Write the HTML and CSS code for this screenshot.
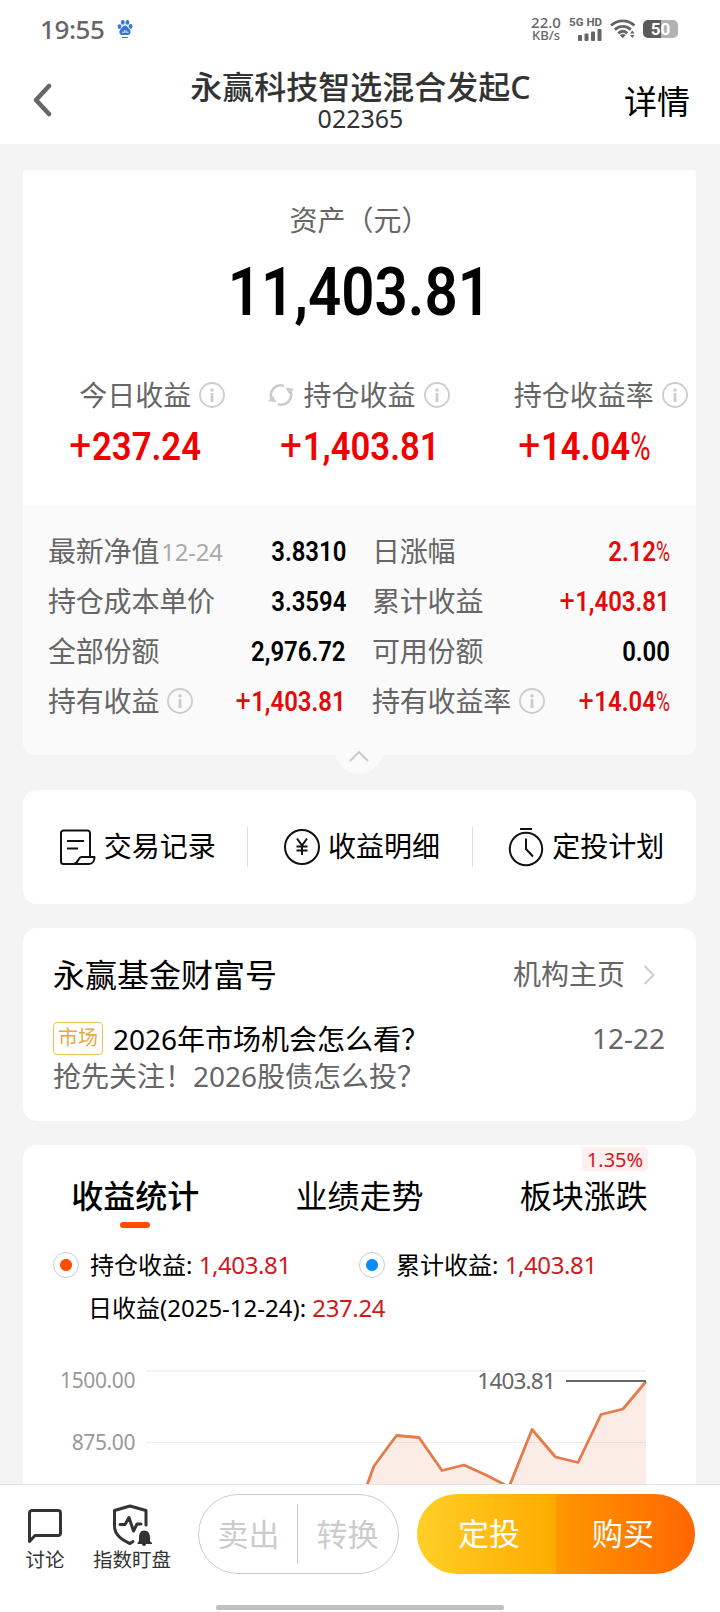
FILE: index.html
```html
<!DOCTYPE html>
<html lang="zh-CN">
<head>
    <meta charset="UTF-8">
    <title>永赢科技智选混合发起C</title>
    <link rel="stylesheet" href="styles.css">
</head>
<body>
<svg width="0" height="0" class="defs">
    <symbol id="info" viewBox="0 0 26 26">
        <circle cx="13" cy="13" r="12" fill="none" stroke="#ccc" stroke-width="1.8"/>
        <circle cx="13" cy="8" r="1.7" fill="#ccc"/>
        <path d="M13 11v9" stroke="#ccc" stroke-width="2.8"/>
    </symbol>
</svg>

<div class="status">
    <span class="clock">19:55</span>
    <svg class="paw" width="16" height="20" viewBox="0 0 16 20">
        <g fill="#3478d4">
            <ellipse cx="2.5" cy="7.6" rx="1.9" ry="2.3"/>
            <ellipse cx="5.8" cy="3.4" rx="1.9" ry="2.4"/>
            <ellipse cx="10.4" cy="3.4" rx="1.9" ry="2.4"/>
            <ellipse cx="13.6" cy="7.4" rx="1.9" ry="2.3"/>
            <path d="M8 6.5c2 0 2.8 2 4.200 3.500 2.200 1.800 1.800 6-1.200 6H5c-3 0-3.400-4.200-1.200-6C5.400 8.500 6 6.500 8 6.500z"/>
        </g>
        <path d="M5 13.200h2.500v-2M9 11.200v2h2.500" fill="none" stroke="#dcd9ff" stroke-width="1.100"/>
        <path d="M5 18.500h6" stroke="#c8405a" stroke-width="1"/>
    </svg>
    <div class="speed"><b>22.0</b><span>KB/s</span></div>
    <div class="signal">
        <b>5G HD</b>
        <svg width="24" height="12" viewBox="0 0 24 12" fill="#666">
            <rect x="0" y="6" width="4" height="6" rx="1"/>
            <rect x="6.500" y="4.500" width="4" height="7.500" rx="1"/>
            <rect x="13" y="2.500" width="4" height="9.500" rx="1"/>
            <rect x="19.500" y="0" width="4" height="12" rx="1"/>
        </svg>
    </div>
    <svg class="wifi" width="26" height="20" viewBox="0 0 26 20">
        <g fill="none" stroke="#666" stroke-width="2.800">
            <path d="M1 6.500C8 .2 17.500.2 24.500 6.500"/>
            <path d="M4.800 10.600c4.800-4.200 11.200-4.200 16 0"/>
            <path d="M8.300 14.200c2.800-2.400 6.200-2.400 9 0"/>
        </g>
        <path d="M9.800 16c2-1.500 4-1.500 6 0l-3 3.200z" fill="#666"/>
        <path d="M20 14.500l2.300-3 2.300 3zM20 16l2.300 3 2.300-3z" fill="#666"/>
    </svg>
    <div class="battery">50</div>
</div>

<header class="header">
    <svg class="back" width="20" height="34" viewBox="0 0 20 34">
        <path d="M16 3L3 17l13 14" fill="none" stroke="#666" stroke-width="4.500" stroke-linecap="round" stroke-linejoin="round"/>
    </svg>
    <div class="title">
        <h1>永赢科技智选混合发起C</h1>
        <p>022365</p>
    </div>
    <a class="more">详情</a>
</header>

<main class="main">
    <section class="asset">
        <div class="asset-label">资产（元）</div>
        <div class="asset-num"><span class="din">11,403.81</span></div>
        <div class="stats">
            <div class="stat">
                <div class="stat-label"><i></i><span>今日收益</span><svg width="26" height="26"><use href="#info"/></svg></div>
                <div class="stat-num"><span class="din"><span class="plus">+</span>237.24</span></div>
            </div>
            <div class="stat">
                <div class="stat-label">
                    <svg class="refresh" width="28" height="24" viewBox="0 0 28 24">
                        <g fill="none" stroke="#ccc" stroke-width="2.600">
                            <path d="M4.500 15.500A9.700 9.700 0 0 1 17 3"/>
                            <path d="M23.500 8.500A9.700 9.700 0 0 1 11 21"/>
                        </g>
                        <path d="M18.500 4.500l8.500 1.500-5 5zM9.500 19.500L1 18l5-5z" fill="#ccc"/>
                    </svg>
                    <span>持仓收益</span><svg width="26" height="26"><use href="#info"/></svg>
                </div>
                <div class="stat-num"><span class="din"><span class="plus">+</span>1,403.81</span></div>
            </div>
            <div class="stat">
                <div class="stat-label"><i></i><span>持仓收益率</span><svg width="26" height="26"><use href="#info"/></svg></div>
                <div class="stat-num"><span class="din"><span class="plus">+</span>14.04<span class="pct">%</span></span></div>
            </div>
        </div>
        <div class="detail">
            <div class="row"><label>最新净值<small>12-24</small></label><span class="din">3.8310</span></div>
            <div class="row"><label>日涨幅</label><span class="din red">2.12<span class="pct">%</span></span></div>
            <div class="row"><label>持仓成本单价</label><span class="din">3.3594</span></div>
            <div class="row"><label>累计收益</label><span class="din red"><span class="plus">+</span>1,403.81</span></div>
            <div class="row"><label>全部份额</label><span class="din">2,976.72</span></div>
            <div class="row"><label>可用份额</label><span class="din">0.00</span></div>
            <div class="row"><label>持有收益<svg width="26" height="26"><use href="#info"/></svg></label><span class="din red"><span class="plus">+</span>1,403.81</span></div>
            <div class="row"><label>持有收益率<svg width="26" height="26"><use href="#info"/></svg></label><span class="din red"><span class="plus">+</span>14.04<span class="pct">%</span></span></div>
        </div>
        <div class="fold">
            <svg width="20" height="12" viewBox="0 0 20 12"><path d="M1 11l9-9 9 9" fill="none" stroke="#ccc" stroke-width="2"/></svg>
        </div>
    </section>

    <section class="links">
        <a>
            <svg width="38" height="38" viewBox="0 0 38 38" fill="none" stroke="#111" stroke-width="2" stroke-linejoin="round">
                <path d="M31 28V5a2.500 2.500 0 0 0-2.500-2.500h-24A2.500 2.500 0 0 0 2 5v28.500A2.500 2.500 0 0 0 4.500 36H30c3.500 0 5.500-3 5.500-7H22.500c-3.500 0-3 6.500-8 7"/>
                <path d="M8 13h17M8 20.500h11"/>
            </svg>
            <span>交易记录</span>
        </a>
        <a>
            <svg width="38" height="38" viewBox="0 0 38 38" fill="none" stroke="#111" stroke-width="2">
                <circle cx="19" cy="19" r="17"/>
                <path d="M14 10.500l5 7 5-7M19 17.500V27M13.500 18.500h11M13.500 22.500h11"/>
            </svg>
            <span>收益明细</span>
        </a>
        <a>
            <svg width="38" height="40" viewBox="0 0 38 40" fill="none" stroke="#111" stroke-width="2">
                <circle cx="19" cy="22" r="16.200"/>
                <path d="M13 2h12M19 11.500V22l7 7.500"/>
            </svg>
            <span>定投计划</span>
        </a>
    </section>

    <section class="wealth">
        <div class="wealth-head">
            <h2>永赢基金财富号</h2>
            <a>机构主页</a>
            <svg width="12" height="20" viewBox="0 0 12 20"><path d="M1.500 1l9 9-9 9" fill="none" stroke="#ccc" stroke-width="2"/></svg>
        </div>
        <div class="news">
            <em>市场</em>
            <span>2026年市场机会怎么看？</span>
            <time>12-22</time>
        </div>
        <p>抢先关注！2026股债怎么投？</p>
    </section>

    <section class="chart-card">
        <nav class="tabs">
            <a class="active">收益统计</a>
            <a>业绩走势</a>
            <a>板块涨跌<sup>1.35%</sup></a>
        </nav>
        <div class="legend">
            <div class="item"><i class="orange"></i>持仓收益:&nbsp;<b>1,403.81</b></div>
            <div class="item"><i class="blue"></i>累计收益:&nbsp;<b>1,403.81</b></div>
            <div class="day">日收益(2025-12-24):&nbsp;<b>237.24</b></div>
        </div>
        <svg class="chart" width="673" height="140" viewBox="23 1350 673 140">
            <path d="M146 1371H646" stroke="#f4f4f4" stroke-width="2"/>
            <path d="M146 1442.500H646" stroke="#eee" stroke-width="1"/>
            <path d="M360 1500L374 1466 396.500 1435.500 419 1437.500 442 1470.500 464 1465 487 1475.500 509 1487 532 1429.500 555.500 1457 578 1462.500 601 1414.500 623 1409 646 1381.500V1500z" fill="#e8693a" fill-opacity=".13"/>
            <path d="M366 1488L374 1466 396.500 1435.500 419 1437.500 442 1470.500 464 1465 487 1475.500 509 1487 532 1429.500 555.500 1457 578 1462.500 601 1414.500 623 1409 646 1381.500" fill="none" stroke="#e57a4a" stroke-width="2.800" stroke-linejoin="round"/>
            <path d="M566 1381H646" stroke="#666" stroke-width="2"/>
            <g class="axis" text-anchor="end">
                <text x="135" y="1388">1500.00</text>
                <text x="135" y="1450">875.00</text>
                <text class="peak" x="555" y="1389">1403.81</text>
            </g>
        </svg>
    </section>
</main>

<footer class="footer">
    <a class="tool talk">
        <svg width="36" height="36" viewBox="0 0 36 36"><path d="M2.500 33.500V5a2.500 2.500 0 0 1 2.500-2.500h26A2.500 2.500 0 0 1 33.500 5v20a2.500 2.500 0 0 1-2.500 2.500H8z" fill="none" stroke="#333" stroke-width="3" stroke-linejoin="round"/></svg>
        <span>讨论</span>
    </a>
    <a class="tool watch">
        <svg width="40" height="42" viewBox="0 0 40 42">
            <g fill="none" stroke="#333" stroke-width="3" stroke-linejoin="round" stroke-linecap="round">
                <path d="M34 21V6.500L18 2 2.500 6.500V22c0 8 6 13.500 15.500 17.500l3-2"/>
                <path d="M8 20.500h5l4-7 4.500 13.500 3.500-7h4"/>
            </g>
            <path d="M32 26.500c4.500 0 6 3.500 6 7v3.500l2 2v1h-6a2 2 0 0 1-4 0h-4.500v-1l1.500-2v-3.500c0-3.500 1.500-7 5-7z" fill="#333"/>
        </svg>
        <span>指数盯盘</span>
    </a>
    <div class="pill"><a>卖出</a><a>转换</a></div>
    <div class="buy"><a>定投</a><a>购买</a></div>
    <div class="home"></div>
</footer>
</body>
</html>
```
FILE: styles.css
```css
* {
    box-sizing: border-box;
    margin: 0;
    padding: 0;
}
body {
    width: 720px;
    height: 1612px;
    overflow: hidden;
    display: flex;
    flex-direction: column;
    background: #f4f4f4;
    font-family: "Noto Sans", "Noto Sans CJK SC", sans-serif;
    font-size: 28px;
    color: #000;
}
svg {
    display: block;
    flex: none;
}
.defs {
    position: absolute;
}
i, em {
    font-style: normal;
}

/* 数字字体 */
.din {
    display: inline-block;
    font-family: Roboto, sans-serif;
    font-weight: 600;
    white-space: nowrap;
    transform: scaleX(.87);
}
.plus {
    font-weight: 400;
    font-size: 1.12em;
    line-height: 1;
    margin-right: .02em;
}
.pct {
    display: inline-block;
    font-weight: 400;
    transform: scaleX(.8);
    transform-origin: left;
    margin-right: -.15em;
}
.red {
    color: #e00b0b;
}

/* 状态栏 */
.status {
    height: 57px;
    padding: 0 42px 0 40px;
    display: flex;
    align-items: center;
    background: #fff;
    color: #666;
}
.clock {
    font-size: 26px;
    line-height: 56px;
    font-weight: 500;
    letter-spacing: -.4px;
}
.paw {
    margin-left: 12px;
}
.speed {
    margin-left: auto;
    width: 34px;
    text-align: center;
    display: flex;
    flex-direction: column;
    font-size: 13px;
    line-height: 13px;
    font-weight: 500;
}
.speed b {
    font-size: 15px;
    font-weight: 500;
}
.signal {
    margin-left: 6px;
    width: 33px;
    display: flex;
    flex-direction: column;
    align-items: flex-end;
}
.signal b {
    font: 700 11.5px/13px Roboto, sans-serif;
    white-space: nowrap;
}
.wifi {
    margin-left: 8px;
}
.battery {
    margin-left: 7px;
    width: 35px;
    height: 18px;
    border-radius: 5px;
    background: linear-gradient(90deg, #5c5c5c 50%, #b3b3b3 50%);
    color: #fff;
    font: 700 17px/18px Roboto, sans-serif;
    text-align: center;
}

/* 标题 */
.header {
    height: 87px;
    padding: 0 30px 0 33px;
    display: grid;
    grid-template-columns: 88px 1fr 90px;
    background: #fff;
}
.back {
    margin-top: 26px;
}
.title {
    text-align: center;
    color: #333;
    padding-top: 9px;
    white-space: nowrap;
}
.title h1 {
    font-size: 32px;
    line-height: 41px;
    font-weight: 500;
}
.title p {
    font-size: 25px;
    line-height: 23px;
}
.more {
    font-size: 33px;
    line-height: 89px;
    text-align: right;
}

.main {
    height: 1340px;
    padding: 26px 24px 0 23px;
    overflow: hidden;
}
section {
    background: #fff;
    border-radius: 14px;
}

/* 资产 */
.asset {
    position: relative;
    height: 585px;
    border-radius: 3px 3px 12px 12px;
}
.asset-label {
    padding-top: 30px;
    line-height: 40px;
    text-align: center;
    color: #666;
}
.asset-num {
    height: 100px;
    font-size: 67px;
    line-height: 98px;
    text-align: center;
}
.asset-num .din {
    transform: scaleX(.87);
}
.stats {
    height: 166px;
    padding-top: 35px;
    display: grid;
    grid-template-columns: repeat(3, 1fr);
}
.stat-label {
    display: grid;
    grid-template-columns: 1fr auto 1fr;
    column-gap: 8px;
    align-items: center;
    line-height: 40px;
    color: #666;
}
.refresh {
    justify-self: end;
}
.stat-num {
    font-size: 39px;
    line-height: 60px;
    text-align: center;
    color: #f00000;
}
.stat-num .din {
    transform: scaleX(.89);
}
.detail {
    height: 249px;
    padding: 20px 26px 0 25px;
    display: grid;
    grid-template-columns: 1fr 1fr;
    grid-auto-rows: 50px;
    column-gap: 26px;
    background: #fafafa;
    border-radius: 0 0 12px 12px;
}
.row {
    display: flex;
    justify-content: space-between;
    line-height: 49px;
    white-space: nowrap;
}
.row label {
    display: flex;
    align-items: center;
    color: #666;
    letter-spacing: -.2px;
}
.row small {
    font-size: 24px;
    color: #aaa;
    margin-left: 2px;
}
.row label svg {
    margin-left: 8px;
}
.row .din {
    font-size: 27.5px;
    line-height: 51px;
    transform-origin: right;
}
.fold {
    position: absolute;
    left: 312px;
    top: 556px;
    width: 48px;
    height: 48px;
    border-radius: 50%;
    background: #fafafa;
    padding: 24px 14px 0;
}

/* 入口 */
.links {
    margin-top: 35px;
    height: 114px;
    display: grid;
    grid-template-columns: repeat(3, 1fr);
}
.links a {
    display: flex;
    align-items: center;
    justify-content: center;
    gap: 7px;
    padding-left: 4px;
}
.links a span {
    padding-bottom: 4px;
}
.links a + a {
    background: linear-gradient(#ddd, #ddd) 0 37px / 1px 40px no-repeat;
}

/* 财富号 */
.wealth {
    margin-top: 24px;
    height: 193px;
    padding: 21px 31px 0 30px;
}
.wealth-head {
    display: flex;
    align-items: center;
    height: 48px;
    color: #666;
}
.wealth-head h2 {
    font-size: 32px;
    font-weight: 400;
    color: #000;
    margin-right: auto;
}
.wealth-head svg {
    margin: 4px 10px 0 18px;
}
.news {
    display: flex;
    align-items: center;
    height: 40px;
    margin-top: 21px;
}
.news em {
    width: 50px;
    height: 33px;
    border: 1.5px solid #e8bf5c;
    border-radius: 4px;
    font-size: 20px;
    line-height: 30px;
    text-align: center;
    color: #e8a83a;
    margin-right: 10px;
}
.news time {
    margin-left: auto;
    color: #666;
}
.wealth p {
    line-height: 36px;
    color: #666;
}

/* 收益统计 */
.chart-card {
    margin-top: 24px;
    height: 400px;
}
.tabs {
    height: 90px;
    display: grid;
    grid-template-columns: repeat(3, 1fr);
}
.tabs a {
    position: relative;
    font-size: 32px;
    line-height: 101px;
    text-align: center;
}
.tabs .active {
    font-weight: 500;
}
.tabs .active::after {
    content: "";
    position: absolute;
    left: 97px;
    top: 77px;
    width: 30px;
    height: 6px;
    border-radius: 3px;
    background: #ff4d00;
}
.tabs sup {
    position: absolute;
    right: 48px;
    top: 2px;
    width: 66px;
    height: 24px;
    border-radius: 4px;
    background: #fff0f0;
    font-size: 20px;
    line-height: 25px;
    color: #d0191c;
}
.legend {
    height: 115px;
    padding: 8px 0 0 30px;
    display: grid;
    grid-template-columns: 306px 1fr;
    grid-template-rows: 43px 43px;
    font-size: 24px;
    line-height: 43px;
}
.legend b {
    font-weight: 400;
    color: #d0191c;
    letter-spacing: -.4px;
}
.item {
    display: flex;
    align-items: center;
}
.item i {
    width: 26px;
    height: 26px;
    border: 1px solid #ccc;
    border-radius: 50%;
    margin-right: 11px;
}
.orange {
    background: radial-gradient(circle, #ff4d00 5.500px, #fff 6.500px);
}
.blue {
    background: radial-gradient(circle, #0a8cff 5.500px, #fff 6.500px);
}
.day {
    grid-column: 1 / 3;
    padding-left: 35px;
    white-space: nowrap;
}
.axis {
    font-size: 21px;
    letter-spacing: -.4px;
    fill: #999;
}
.axis .peak {
    font-size: 22.5px;
    letter-spacing: -.8px;
    fill: #666;
}

/* 底部 */
.footer {
    position: relative;
    height: 128px;
    border-top: 1px solid #e6e6e6;
    background: #fff;
    padding: 9px 25px 0 25px;
    display: flex;
}
.tool {
    display: flex;
    flex-direction: column;
    align-items: center;
    justify-content: flex-end;
    height: 80px;
    font-size: 19.5px;
    line-height: 28px;
    color: #333;
    white-space: nowrap;
}
.talk {
    width: 40px;
}
.talk svg {
    margin-bottom: 2px;
}
.watch {
    width: 80px;
    margin-left: 27px;
}
.pill {
    width: 201px;
    height: 80px;
    margin-left: 26px;
    border: 1px solid #ccc;
    border-radius: 40px;
    display: flex;
    color: #ccc;
}
.pill a, .buy a {
    flex: 1;
    font-size: 31px;
    line-height: 78px;
    text-align: center;
}
.pill a:first-child {
    background: linear-gradient(#ccc, #ccc) right 9px / 1px 60px no-repeat;
}
.pill a + a {
    padding-right: 1px;
}
.buy {
    width: 278px;
    height: 80px;
    margin-left: 18px;
    border-radius: 40px;
    overflow: hidden;
    display: flex;
    color: #fff;
}
.buy a {
    background: linear-gradient(90deg, #ffcf28, #ffab00);
    padding-left: 5px;
}
.buy a + a {
    background: linear-gradient(90deg, #ff9800, #ff6600);
    padding: 0 5px 0 0;
}
.home {
    position: absolute;
    left: 216px;
    top: 120px;
    width: 288px;
    height: 5px;
    border-radius: 3px;
    background: #c0c0c0;
}
```
